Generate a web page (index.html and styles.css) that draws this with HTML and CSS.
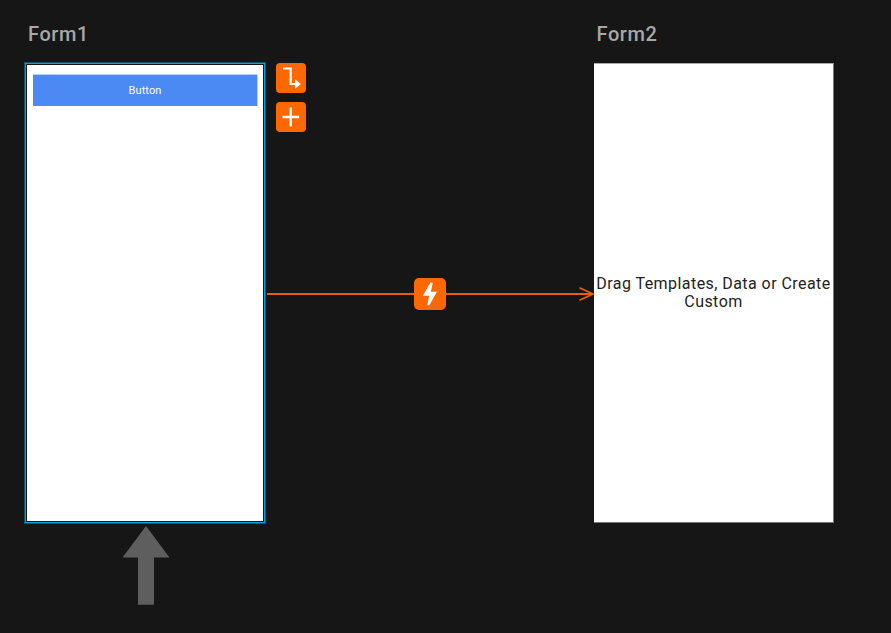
FILE: index.html
```html
<!DOCTYPE html>
<html lang="en">
<head>
<meta charset="utf-8">
<title>Form flow</title>
<link rel="stylesheet" href="styles.css">
</head>
<body>
<main class="canvas">
  <section class="node node-source">
    <h2 class="node-title">Form1</h2>
    <div class="screen screen-selected">
      <div class="form-button">Button</div>
    </div>
    <svg class="start-arrow" viewBox="0 0 48 79"><path fill="#5e5e5e" d="M24 0 47.5 31.5H32V78.7H16V31.5H.5z"/></svg>
    <div class="tools">
      <svg class="tool" viewBox="0 0 30 30"><path fill="none" stroke="#fff" stroke-width="2.2" d="M7 5.5H14.7V21H21"/><path fill="#fff" d="M19 16.2 25 21 19 25.7z"/></svg>
      <svg class="tool" viewBox="0 0 30 30"><path fill="none" stroke="#fff" stroke-width="2.4" d="M14.8 5.5V24.5M6.5 15H23.2"/></svg>
    </div>
  </section>

  <svg class="connector" viewBox="0 0 328 20"><path fill="none" stroke="#e95f06" stroke-width="1.8" d="M0 10H326M312.5 3.7 326 10 312.5 16.3"/></svg>
  <svg class="event" viewBox="0 0 32 32"><path fill="#fff" d="M16.6 4.3 8.8 17.8H15.2L13.2 27.3H15.3L23 13.8H16.9L18.7 5z"/></svg>

  <section class="node node-target">
    <h2 class="node-title">Form2</h2>
    <div class="screen screen-empty">
      <p class="hint">Drag Templates, Data or Create<br>Custom</p>
    </div>
  </section>
</main>
</body>
</html>
```
FILE: styles.css
```css
* { box-sizing: border-box; }

body {
  margin: 0;
  background: #161616;
  font-family: Roboto, sans-serif;
}

svg { display: block; }

.canvas {
  position: relative;
  width: 891px;
  height: 633px;
  overflow: hidden;
}

.node { position: absolute; top: 22px; }
.node-source { left: 24px; width: 242px; }
.node-target { left: 594px; width: 240px; }

.node-title {
  height: 40px;
  margin: 0;
  padding-left: 4px;
  color: #a8a8a8;
  font-size: 20px;
  font-weight: 500;
  line-height: 24px;
  letter-spacing: 0.6px;
}
.node-target .node-title {
  height: 41px;
  padding-left: 2.5px;
}

.screen { background: #fff; }

.screen-selected {
  height: 462px;
  padding: 12px 8px 0;
  border: 1px solid #0b5471;
  box-shadow: inset 0 0 0 1px #00a3e3, inset 0 0 0 2px #161616;
}

.form-button {
  width: 224px;
  height: 31px;
  background: #4b89f3;
  box-shadow: 0 -1px #b5cffa, 1px 0 #b5cffa;
  color: #fff;
  font-size: 11px;
  line-height: 31px;
  letter-spacing: 0.1px;
  text-align: center;
}

.start-arrow {
  width: 48px;
  height: 79px;
  margin: 2px auto 0 97.7px;
}

.tools {
  position: absolute;
  top: 40.7px;
  left: 251.7px;
  display: flex;
  flex-direction: column;
  gap: 9px;
}

.tool {
  width: 30px;
  height: 30px;
  border-radius: 4px;
  background: #ff6700;
}

.connector {
  position: absolute;
  top: 283.8px;
  left: 267px;
  width: 328px;
  height: 20px;
}

.event {
  position: absolute;
  top: 278px;
  left: 414px;
  width: 32px;
  height: 32px;
  border-radius: 5px;
  background: #ff6700;
}

.screen-empty {
  display: flex;
  align-items: center;
  justify-content: center;
  height: 460px;
  border: 1px solid #777;
  border-top-color: #aaa;
  border-left: 0;
}

.hint {
  margin: 0;
  color: #222;
  font-size: 16px;
  line-height: 18px;
  letter-spacing: 0.44px;
  text-align: center;
  white-space: nowrap;
}
```
